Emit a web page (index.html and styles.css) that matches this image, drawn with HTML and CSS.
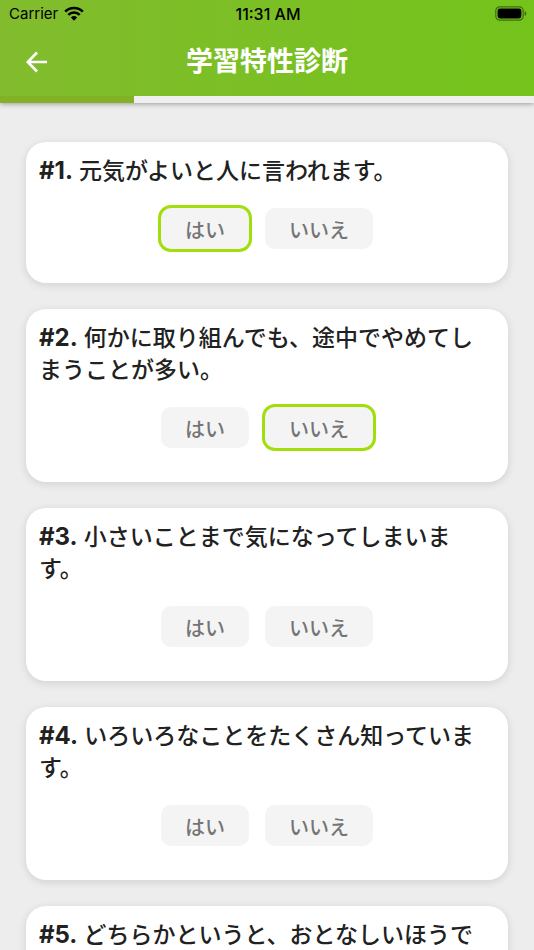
FILE: index.html
```html
<!DOCTYPE html>
<html lang="ja">
<head>
    <meta charset="UTF-8">
    <meta name="viewport" content="width=device-width, initial-scale=1.0">
    <title>学習特性診断</title>
    <link rel="stylesheet" href="styles.css">
</head>
<body>
    <header class="header">
        <div class="status-bar">
            <div class="carrier">
                <span>Carrier</span>
                <svg class="wifi" viewBox="0 0 20 15" aria-hidden="true">
                    <path d="M1.2 5.6a12.5 12.5 0 0 1 17.6 0" fill="none" stroke="#000" stroke-width="2.6"/>
                    <path d="M4.3 8.9a8.1 8.1 0 0 1 11.4 0" fill="none" stroke="#000" stroke-width="2.6"/>
                    <path d="M10 14.7 6.9 11.5a4.5 4.5 0 0 1 6.2 0z"/>
                </svg>
            </div>
            <span class="time">11:31 AM</span>
            <svg class="battery" viewBox="0 0 32 15" aria-hidden="true">
                <rect x="0.8" y="0.8" width="27.4" height="13.4" rx="4" fill="none" stroke="#000" stroke-opacity="0.45" stroke-width="1.2"/>
                <rect x="2.6" y="2.6" width="23.8" height="9.8" rx="2.4"/>
                <path d="M29.7 5.2c2 .7 2 3.9 0 4.6z" fill-opacity="0.5"/>
            </svg>
        </div>
        <div class="title-bar">
            <button class="back" type="button" aria-label="戻る">
                <svg viewBox="0 0 22 22" aria-hidden="true">
                    <path d="M21 11H2M11 1.5 1.8 11l9.2 9.5" fill="none" stroke="#fff" stroke-width="2.6"/>
                </svg>
            </button>
            <h1>学習特性診断</h1>
        </div>
        <div class="progress"><div class="progress-fill" style="width: 25%"></div></div>
    </header>

    <main class="questions">
        <section class="card">
            <h2><span class="number">#1.</span> 元気がよいと人に言われます。</h2>
            <div class="answers">
                <button class="answer selected" type="button" aria-pressed="true">はい</button>
                <button class="answer" type="button" aria-pressed="false">いいえ</button>
            </div>
        </section>
        <section class="card">
            <h2><span class="number">#2.</span> 何かに取り組んでも、途中でやめてしまうことが多い。</h2>
            <div class="answers">
                <button class="answer" type="button" aria-pressed="false">はい</button>
                <button class="answer selected" type="button" aria-pressed="true">いいえ</button>
            </div>
        </section>
        <section class="card">
            <h2><span class="number">#3.</span> 小さいことまで気になってしまいます。</h2>
            <div class="answers">
                <button class="answer" type="button" aria-pressed="false">はい</button>
                <button class="answer" type="button" aria-pressed="false">いいえ</button>
            </div>
        </section>
        <section class="card">
            <h2><span class="number">#4.</span> いろいろなことをたくさん知っています。</h2>
            <div class="answers">
                <button class="answer" type="button" aria-pressed="false">はい</button>
                <button class="answer" type="button" aria-pressed="false">いいえ</button>
            </div>
        </section>
        <section class="card">
            <h2><span class="number">#5.</span> どちらかというと、おとなしいほうです。</h2>
            <div class="answers">
                <button class="answer" type="button" aria-pressed="false">はい</button>
                <button class="answer" type="button" aria-pressed="false">いいえ</button>
            </div>
        </section>
    </main>

    <script>
        document.querySelectorAll('.answers').forEach(function (group) {
            group.addEventListener('click', function (e) {
                if (!e.target.classList.contains('answer')) return;
                group.querySelectorAll('.answer').forEach(function (btn) {
                    const on = btn === e.target;
                    btn.classList.toggle('selected', on);
                    btn.setAttribute('aria-pressed', on);
                });
            });
        });
    </script>
</body>
</html>
```
FILE: styles.css
```css
* {
    box-sizing: border-box;
}
html {
    scrollbar-width: none;
}
body {
    margin: 0;
    background-color: #ededed;
    color: #212121;
    font-family: Inter, "Noto Sans CJK JP", sans-serif;
}
h1, h2 {
    margin: 0;
}
button {
    border: none;
    font-family: inherit;
    cursor: pointer;
}
.header {
    position: sticky;
    top: 0;
    z-index: 1;
    background: linear-gradient(to right, #82bc2e, #74c31b);
    box-shadow: 0 1px 5px rgba(0, 0, 0, 0.35);
}
.status-bar {
    display: grid;
    grid-template-columns: 1fr auto 1fr;
    align-items: center;
    height: 27px;
    padding: 0 7px 0 9px;
    color: #000;
    font-size: 15px;
}
.carrier {
    display: flex;
    align-items: center;
    gap: 6px;
}
.wifi {
    width: 20px;
    height: 15px;
}
.time {
    font-size: 16px;
    font-weight: 500;
}
.battery {
    justify-self: end;
    width: 32px;
    height: 15px;
}
.title-bar {
    display: grid;
    grid-template-columns: 1fr auto 1fr;
    align-items: center;
    height: 69px;
    padding: 0 26px;
}
.title-bar h1 {
    color: #fff;
    font-size: 27px;
    font-weight: 700;
    line-height: 40px;
}
.back {
    justify-self: start;
    padding: 0;
    background: none;
}
.back svg {
    display: block;
    width: 22px;
    height: 22px;
}
.progress {
    height: 7px;
    background-color: #efefef;
}
.progress-fill {
    height: 100%;
    background-color: #83b024;
}
.questions {
    display: flex;
    flex-direction: column;
    gap: 26px;
    padding: 39px 26px;
}
.card {
    padding: 13px 13px 34px;
    border-radius: 20px;
    background-color: #fff;
    box-shadow: 0 2px 8px rgba(0, 0, 0, 0.12);
}
.card h2 {
    padding-right: 8px;
    font-size: 23px;
    font-weight: 500;
    line-height: 32px;
}
.number {
    font-size: 24px;
    font-weight: 700;
}
.answers {
    display: flex;
    justify-content: center;
    gap: 16px;
    margin-top: 21px;
}
.answer {
    height: 41px;
    padding: 2px 24px 0;
    border-radius: 10px;
    background-color: #f4f4f4;
    color: #757575;
    font-size: 20px;
    font-weight: 500;
}
.answer.selected {
    box-shadow: 0 0 0 3px #a2dd0c;
}
```
